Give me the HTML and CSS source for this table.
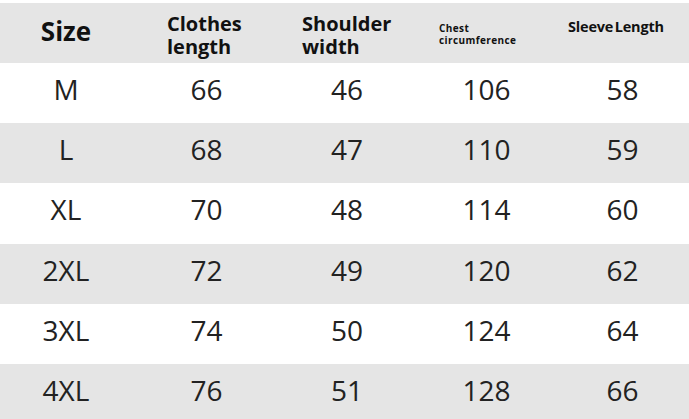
FILE: index.html
```html
<!DOCTYPE html>
<html lang="en">
<head>
<meta charset="utf-8">
<title>Size chart</title>
<link rel="stylesheet" href="styles.css">
</head>
<body>
<div class="chart">
  <div class="row head">
    <div class="cell h-size">Size</div>
    <div class="cell h-two h-clothes">Clothes<br>length</div>
    <div class="cell h-two h-shoulder">Shoulder<br>width</div>
    <div class="cell h-chest">Chest<br>circumference</div>
    <div class="cell h-sleeve">Sleeve Length</div>
  </div>
  <div class="row">
    <div class="cell">M</div><div class="cell">66</div><div class="cell">46</div><div class="cell">106</div><div class="cell">58</div>
  </div>
  <div class="row alt">
    <div class="cell">L</div><div class="cell">68</div><div class="cell">47</div><div class="cell">110</div><div class="cell">59</div>
  </div>
  <div class="row">
    <div class="cell">XL</div><div class="cell">70</div><div class="cell">48</div><div class="cell">114</div><div class="cell">60</div>
  </div>
  <div class="row alt">
    <div class="cell">2XL</div><div class="cell">72</div><div class="cell">49</div><div class="cell">120</div><div class="cell">62</div>
  </div>
  <div class="row">
    <div class="cell">3XL</div><div class="cell">74</div><div class="cell">50</div><div class="cell">124</div><div class="cell">64</div>
  </div>
  <div class="row alt">
    <div class="cell">4XL</div><div class="cell">76</div><div class="cell">51</div><div class="cell">128</div><div class="cell">66</div>
  </div>
</div>
</body>
</html>
```

FILE: styles.css
```css
html, body {
  margin: 0;
  padding: 0;
  background: #ffffff;
}

body {
  padding-top: 3px;
  font-family: "Open Sans", "Noto Sans", sans-serif;
  color: #222222;
  overflow: hidden;
}

.chart {
  display: flex;
  flex-direction: column;
  width: 689px;
}

.row {
  display: grid;
  grid-template-columns: 132px 149px 132px 147px 125px;
  height: 60.2px;
  background: #ffffff;
}

.row.alt,
.row.head {
  background: #e5e5e5;
}

.row.head {
  height: 60px;
}

.cell {
  text-align: center;
  font-size: 28px;
  line-height: 30px;
  font-stretch: 92%;
  padding-top: 11px;
  color: #222222;
}

.head .cell {
  color: #111111;
  font-weight: 700;
  font-stretch: 100%;
  text-align: left;
}

.head .h-size {
  text-align: center;
  font-size: 26px;
  line-height: 30px;
  padding-top: 13px;
}

.head .h-two {
  font-size: 20px;
  line-height: 23px;
  padding-top: 9px;
}

.head .h-clothes {
  padding-left: 35px;
}

.head .h-shoulder {
  padding-left: 21px;
}

.head .h-chest {
  font-size: 10px;
  line-height: 12px;
  letter-spacing: 0.4px;
  padding-top: 19px;
  padding-left: 26px;
}

.head .h-sleeve {
  font-size: 14.5px;
  line-height: 18px;
  letter-spacing: -0.2px;
  padding-top: 15px;
  padding-left: 8px;
  word-spacing: -2px;
}
```
